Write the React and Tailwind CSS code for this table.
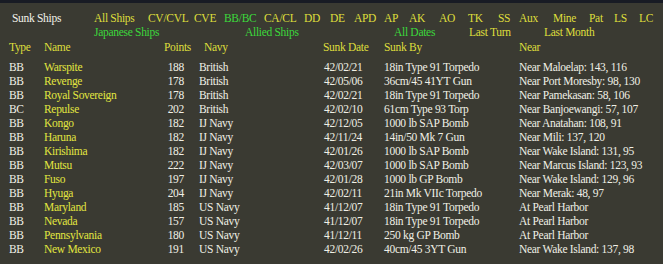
const ships = [
  ['BB', 'Warspite', 188, 'British', '42/02/21', '18in Type 91 Torpedo', 'Near Maloelap: 143, 116'],
  ['BB', 'Revenge', 178, 'British', '42/05/06', '36cm/45 41YT Gun', 'Near Port Moresby: 98, 130'],
  ['BB', 'Royal Sovereign', 178, 'British', '42/02/21', '18in Type 91 Torpedo', 'Near Pamekasan: 58, 106'],
  ['BC', 'Repulse', 202, 'British', '42/02/10', '61cm Type 93 Torp', 'Near Banjoewangi: 57, 107'],
  ['BB', 'Kongo', 182, 'IJ Navy', '42/12/05', '1000 lb SAP Bomb', 'Near Anatahan: 108, 91'],
  ['BB', 'Haruna', 182, 'IJ Navy', '42/11/24', '14in/50 Mk 7 Gun', 'Near Mili: 137, 120'],
  ['BB', 'Kirishima', 182, 'IJ Navy', '42/01/26', '1000 lb SAP Bomb', 'Near Wake Island: 131, 95'],
  ['BB', 'Mutsu', 222, 'IJ Navy', '42/03/07', '1000 lb SAP Bomb', 'Near Marcus Island: 123, 93'],
  ['BB', 'Fuso', 197, 'IJ Navy', '42/01/28', '1000 lb GP Bomb', 'Near Wake Island: 129, 96'],
  ['BB', 'Hyuga', 204, 'IJ Navy', '42/02/11', '21in Mk VIIc Torpedo', 'Near Merak: 48, 97'],
  ['BB', 'Maryland', 185, 'US Navy', '41/12/07', '18in Type 91 Torpedo', 'At Pearl Harbor'],
  ['BB', 'Nevada', 157, 'US Navy', '41/12/07', '18in Type 91 Torpedo', 'At Pearl Harbor'],
  ['BB', 'Pennsylvania', 180, 'US Navy', '41/12/11', '250 kg GP Bomb', 'At Pearl Harbor'],
  ['BB', 'New Mexico', 191, 'US Navy', '42/02/26', '40cm/45 3YT Gun', 'Near Wake Island: 137, 98'],
];

const App = () => {
  return (
    <div className="w-[663px] h-[264px] overflow-hidden bg-[#3a3a32] [font-family:Liberation_Serif,serif] text-[11.5px] leading-[14px] tracking-[-0.3px] text-[#f0f0e6] whitespace-nowrap">
      <div className="h-[3px] bg-[#181b24]" />
      <div className="pt-[8px]">
        {/* Filter: ship types */}
        <div className="flex h-[14px] pl-[12px] text-[#dede3c]">
          <span className="w-[82px] text-[#f2f2ea]">Sunk Ships</span>
          <span className="w-[54px]">All Ships</span>
          <span className="w-[46px]">CV/CVL</span>
          <span className="w-[30px]">CVE</span>
          <span className="w-[40px] text-[#3cd83c]">BB/BC</span>
          <span className="w-[40px]">CA/CL</span>
          <span className="w-[26px]">DD</span>
          <span className="w-[24px]">DE</span>
          <span className="w-[30px]">APD</span>
          <span className="w-[25px]">AP</span>
          <span className="w-[30px]">AK</span>
          <span className="w-[29px]">AO</span>
          <span className="w-[30px]">TK</span>
          <span className="w-[21px]">SS</span>
          <span className="w-[34px]">Aux</span>
          <span className="w-[36px]">Mine</span>
          <span className="w-[25px]">Pat</span>
          <span className="w-[25px]">LS</span>
          <span>LC</span>
        </div>
        {/* Filter: side and dates */}
        <div className="flex h-[15px] pl-[94px] text-[#dede3c]">
          <span className="w-[151px] text-[#3cd83c]">Japanese Ships</span>
          <span className="w-[149px] text-[#3cd83c]">Allied Ships</span>
          <span className="w-[75px] text-[#3cd83c]">All Dates</span>
          <span className="w-[75px]">Last Turn</span>
          <span>Last Month</span>
        </div>
        {/* Column headers */}
        <div className="flex h-[14px] pl-[9px] text-[#dede3c]">
          <span className="w-[35px]">Type</span>
          <span className="w-[120px]">Name</span>
          <span className="w-[40px]">Points</span>
          <span className="w-[119px]">Navy</span>
          <span className="w-[61px]">Sunk Date</span>
          <span className="w-[135px]">Sunk By</span>
          <span>Near</span>
        </div>

        <div className="mt-[6px] flex flex-col">
          {ships.map(([type, name, pts, navy, date, by, near]) => (
            <div key={name} className="flex h-[14px] pl-[9px]">
              <span className="w-[35px]">{type}</span>
              <span className="w-[115px] text-[#e2e640]">{name}</span>
              <span className="w-[25px] text-right">{pts}</span>
              <span className="w-[140px] pl-[15px]">{navy}</span>
              <span className="w-[60px]">{date}</span>
              <span className="w-[135px]">{by}</span>
              <span>{near}</span>
            </div>
          ))}
        </div>
      </div>
    </div>
  );
};

export default App;
